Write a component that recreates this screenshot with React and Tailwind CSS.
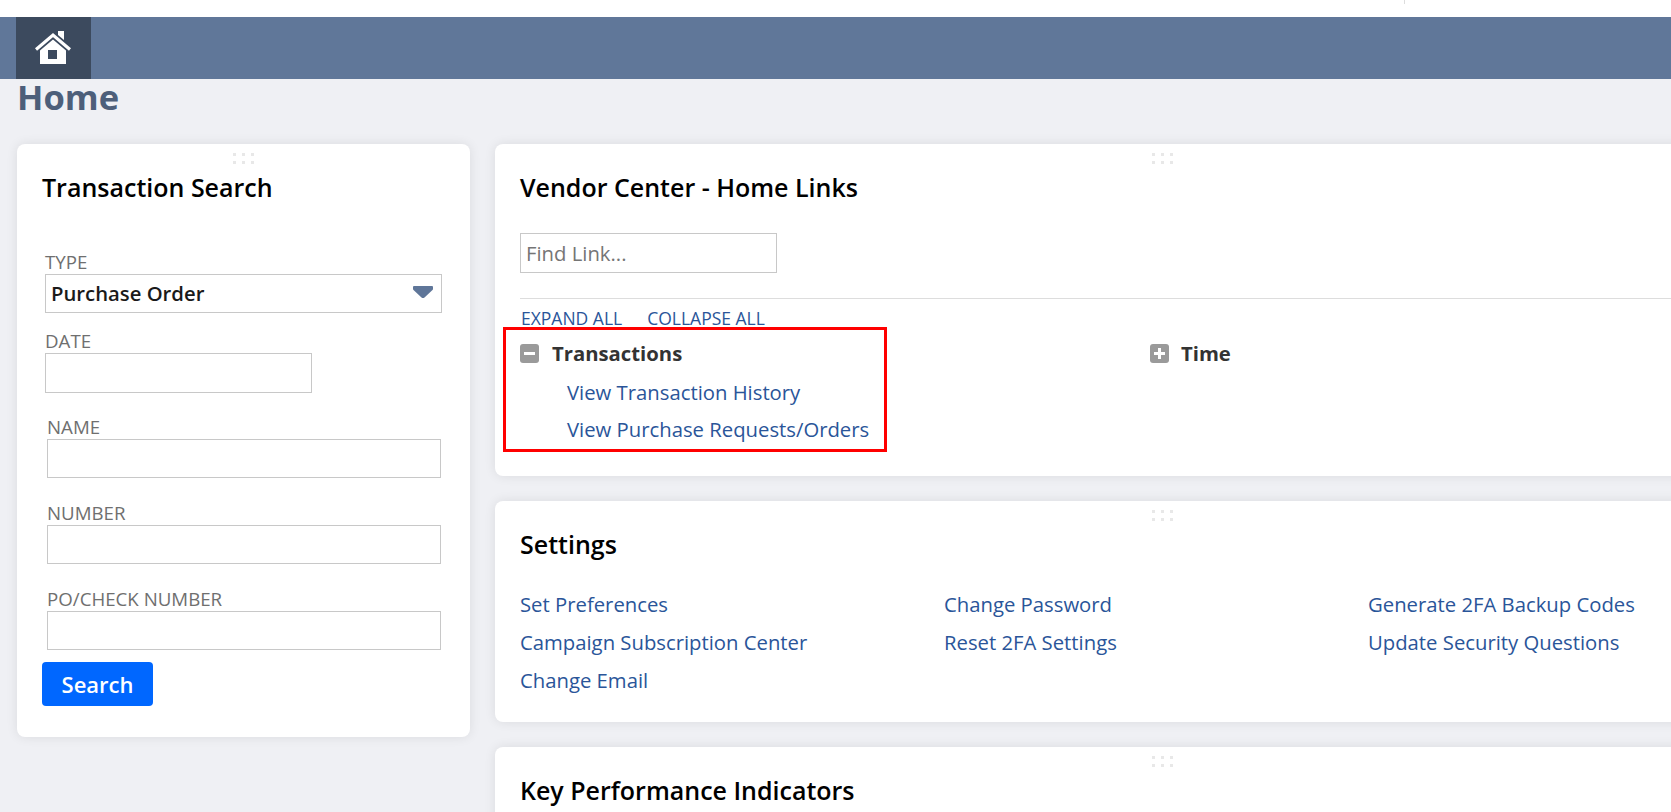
import React from 'react';

const Handle = () => (
  <div className="flex justify-center pt-[9px]">
    <svg width="21" height="11" viewBox="0 0 21 11" fill="#e8e8e8">
      <rect x="0" y="0" width="3" height="3" />
      <rect x="9" y="0" width="3" height="3" />
      <rect x="18" y="0" width="3" height="3" />
      <rect x="0" y="8" width="3" height="3" />
      <rect x="9" y="8" width="3" height="3" />
      <rect x="18" y="8" width="3" height="3" />
    </svg>
  </div>
);

const HomeIcon = () => (
  <svg width="36" height="33" viewBox="0 0 36 33" className="-mt-px -ml-px">
    <path d="M23 0h6v9l-6-5z" fill="#fff" />
    <path d="M1 18.500L18 4l17 14.500" fill="none" stroke="#fff" strokeWidth="3.200" />
    <path fillRule="evenodd" d="M5 19.500L18 8.500l13 11V33H5zM13 19v9h9v-9z" fill="#fff" />
  </svg>
);

const ToggleIcon = ({ open }) => (
  <svg width="19" height="19" viewBox="0 0 19 19" className="shrink-0">
    <rect width="19" height="19" rx="3" fill="#9a9a9a" />
    <rect x="4" y="8" width="11" height="3" fill="#fff" />
    {!open && <rect x="8" y="4" width="3" height="11" fill="#fff" />}
  </svg>
);

const Field = ({ label, className }) => (
  <div className={className}>
    <div className="text-[18.700px] leading-6 text-[#6f6f6f]">{label}</div>
    <div className="h-[39px] border border-[#c8c8c8] bg-white" />
  </div>
);

const Card = ({ title, className, children }) => (
  <section className={`rounded-lg bg-white shadow-[0_0_12px_rgba(0,0,0,0.09)] ${className}`}>
    <Handle />
    <h2 className="mt-2 text-[25px] leading-[30px] font-semibold text-black">{title}</h2>
    {children}
  </section>
);

const settingsLinks = [
  'Set Preferences',
  'Change Password',
  'Generate 2FA Backup Codes',
  'Campaign Subscription Center',
  'Reset 2FA Settings',
  'Update Security Questions',
  'Change Email',
];

export default function App() {
  return (
    <div className="h-[812px] overflow-hidden bg-[#eff0f4] font-['Open_Sans',sans-serif]">
      <div className="relative h-[17px] bg-white">
        <div className="absolute left-[1404px] top-0 h-1 w-px bg-[#dddddd]" />
      </div>
      <nav className="h-[62px] bg-[#607799] pl-4">
        <div className="flex h-full w-[75px] items-center justify-center bg-[#3c4a5e]">
          <HomeIcon />
        </div>
      </nav>
      <h1 className="ml-[17px] text-[34.500px] leading-[36px] font-bold text-[#4d5f7a]">Home</h1>

      <div className="mt-[29px] ml-[17px] flex w-[1812px] items-start gap-[25px]">
        <Card title="Transaction Search" className="h-[593px] w-[453px] shrink-0 px-[25px]">
          <div className="mt-[48px]">
            <div className="ml-[3px] text-[18.700px] leading-6 text-[#6f6f6f]">TYPE</div>
            <div className="ml-[3px] flex h-[39px] w-[397px] items-center justify-between border border-[#c8c8c8] pr-[8px] pl-[5px]">
              <span className="text-[20.300px] font-semibold text-[#1a1a1a]">Purchase Order</span>
              <svg width="20" height="12" viewBox="0 0 20 12" className="-mt-[3px]">
                <path d="M1 0h18q1 0 1 1v2q0 .5-.5 1L11.500 11.500q-1.500 1-3 0L.5 4Q0 3.500 0 3V1q0-1 1-1z" fill="#5f7699" />
              </svg>
            </div>
            <Field label="DATE" className="mt-4 ml-[3px] w-[267px] [&>div:last-child]:h-[40px]" />
            <Field label="NAME" className="mt-[22px] ml-[5px] w-[394px]" />
            <Field label="NUMBER" className="mt-[23px] ml-[5px] w-[394px]" />
            <Field label="PO/CHECK NUMBER" className="mt-[23px] ml-[5px] w-[394px]" />
            <button className="mt-3 h-[44px] w-[111px] rounded bg-[#0067ff] text-[22px] font-semibold text-white">
              Search
            </button>
          </div>
        </Card>

        <div className="flex flex-1 flex-col gap-[25px]">
          <Card title="Vendor Center - Home Links" className="relative h-[332px] px-[25px]">
            <input
              placeholder="Find Link..."
              className="mt-[31px] block h-10 w-[257px] border border-[#c8c8c8] px-[5px] text-[20.300px] outline-none placeholder:text-[#757575]"
            />
            <hr className="mt-[25px] border-[#dddddd]" />
            <div className="mt-[7px] ml-px flex gap-[25px] text-[17.500px] leading-6 text-[#2a5599]">
              <a>EXPAND ALL</a>
              <a>COLLAPSE ALL</a>
            </div>
            <div className="mt-[11px] grid grid-cols-[630px_1fr]">
              <div>
                <div className="flex items-center gap-[13px]">
                  <ToggleIcon open />
                  <span className="text-[20.300px] leading-[24px] font-bold text-[#333333]">Transactions</span>
                </div>
                <div className="mt-[15px] ml-[47px] flex flex-col gap-[12px] text-[20.300px] leading-[25px] text-[#2a5599]">
                  <a>View Transaction History</a>
                  <a>View Purchase Requests/Orders</a>
                </div>
              </div>
              <div className="flex h-6 items-center gap-[12px]">
                <ToggleIcon />
                <span className="text-[20.300px] leading-[24px] font-bold text-[#333333]">Time</span>
              </div>
            </div>
            <div className="pointer-events-none absolute top-[183px] left-[8px] h-[125px] w-[384px] border-[3px] border-[#ff0000]" />
          </Card>

          <Card title="Settings" className="h-[221px] px-[25px]">
            <div className="mt-[33px] grid grid-cols-[424px_424px_1fr] gap-y-[13px] text-[20.300px] leading-[25px] text-[#2a5599]">
              {settingsLinks.map((link) => (
                <a key={link}>{link}</a>
              ))}
            </div>
          </Card>

          <Card title="Key Performance Indicators" className="h-[200px] px-[25px]" />
        </div>
      </div>
    </div>
  );
}
